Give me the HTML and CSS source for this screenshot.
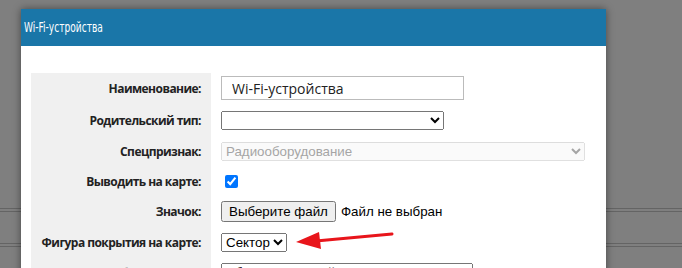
FILE: index.html
```html
<!DOCTYPE html>
<html>
<head>
    <title>Wi-Fi-устройства</title>
    <meta name="viewport" content="width=device-width, initial-scale=1">
    <link rel="stylesheet" href="styles.css">
</head>
<body>

<div id="page-behind">
    <div class="behind-line line-one"></div>
    <div class="behind-line line-two"></div>
</div>

<div id="overlay"></div>

<div id="dialog">
    <div id="dialog-header"><span class="dialog-title">Wi-Fi-устройства</span></div>
    <div id="dialog-body">
        <div class="form-grid">
            <div class="label">Наименование:</div>
            <div class="field"><input type="text" class="text-input" value="Wi-Fi-устройства"></div>

            <div class="label">Родительский тип:</div>
            <div class="field"><select class="select-parent"><option></option></select></div>

            <div class="label">Спецпризнак:</div>
            <div class="field"><select class="select-special" disabled><option>Радиооборудование</option></select></div>

            <div class="label">Выводить на карте:</div>
            <div class="field"><input type="checkbox" checked></div>

            <div class="label">Значок:</div>
            <div class="field"><button class="file-button">Выберите файл</button><span class="file-name">Файл не выбран</span></div>

            <div class="label">Фигура покрытия на карте:</div>
            <div class="field">
                <select class="select-shape"><option>Сектор</option></select>
                <svg class="arrow" width="110" height="24" viewBox="0 0 110 24">
                    <line x1="20" y1="12" x2="96" y2="5" stroke="#e8151b" stroke-width="3" stroke-linecap="round"/>
                    <polygon points="0,13 23,3 25,20" fill="#e8151b"/>
                </svg>
            </div>

            <div class="label">Оборудование:</div>
            <div class="field"><select class="select-owner"><option>Абонент Дальний Эфир</option></select></div>
        </div>
    </div>
</div>

</body>
</html>
```

FILE: styles.css
```css
html, body {
    margin: 0px;
    padding: 0px;
    width: 682px;
    height: 268px;
    overflow: hidden;
    background-color: #ffffff;
}

#page-behind {
    position: absolute;
    top: 0px;
    left: 0px;
    width: 100%;
    height: 100%;
}

.behind-line {
    position: absolute;
    left: 0px;
    width: 100%;
    height: 2px;
    border-top: 1px solid #c8c8c8;
    border-bottom: 1px solid #c8c8c8;
}

.line-one {
    top: 208px;
}

.line-two {
    top: 243px;
}

#overlay {
    position: absolute;
    top: 0px;
    left: 0px;
    width: 100%;
    height: 100%;
    background-color: rgba(0, 0, 0, 0.5);
}

#dialog {
    position: absolute;
    top: 9px;
    left: 21px;
    width: 585px;
    height: 300px;
    background-color: #ffffff;
    box-shadow: 0px 0px 8px rgba(0, 0, 0, 0.45);
}

#dialog-header {
    height: 37px;
    padding-left: 3px;
    background-color: #1a76a8;
    color: #ffffff;
    line-height: 36px;
    overflow: hidden;
}

/* the title font is a narrow one, squeeze the closest we have */
.dialog-title {
    display: inline-block;
    font-family: "DejaVu Sans Condensed", sans-serif;
    font-size: 14px;
    transform: scaleX(0.72);
    transform-origin: left center;
}

#dialog-body {
    padding: 27px 0px 0px 10px;
}

.form-grid {
    display: grid;
    grid-template-columns: 180px 1fr;
    grid-template-rows: 30px 34px 29px 30px 31px 30px 30px;
}

.label {
    background-color: #f0f0f0;
    padding-right: 10px;
    display: flex;
    align-items: center;
    justify-content: flex-end;
    white-space: nowrap;
    font-family: "Open Sans", sans-serif;
    font-size: 12px;
    font-weight: bold;
    letter-spacing: -0.55px;
    color: #222222;
}

.field {
    padding-left: 10px;
    display: flex;
    align-items: center;
    font-family: "Liberation Sans", Arial, sans-serif;
    font-size: 13.33px;
    color: #000000;
}

.text-input {
    width: 243px;
    height: 24px;
    box-sizing: border-box;
    padding: 0px 10px;
    margin: 0px;
    border: 1px solid #bbbbbb;
    font-family: "Open Sans", sans-serif;
    font-size: 14px;
    color: #222222;
}

select {
    height: 19px;
    margin: 0px;
    font-family: "Liberation Sans", Arial, sans-serif;
    font-size: 13.33px;
}

.select-parent {
    width: 223px;
}

.select-special {
    width: 364px;
}

.select-owner {
    width: 252px;
}

.file-button {
    height: 21px;
    margin: 0px;
    font-family: "Liberation Sans", Arial, sans-serif;
    font-size: 13.33px;
}

.file-name {
    margin-left: 5px;
}

.arrow {
    margin-left: 9px;
    margin-top: -3px;
}
```
